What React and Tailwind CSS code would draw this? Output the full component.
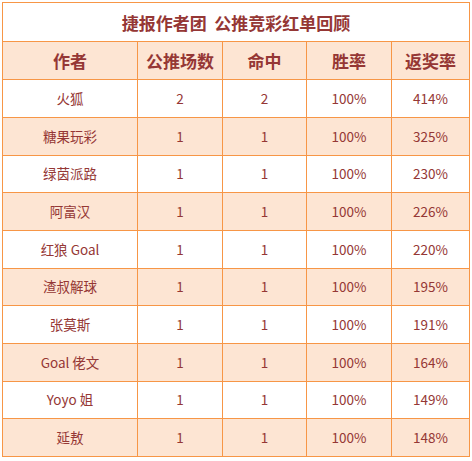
import React from "react";

const rows = [
  ["火狐", "2", "2", "100%", "414%"],
  ["糖果玩彩", "1", "1", "100%", "325%"],
  ["绿茵派路", "1", "1", "100%", "230%"],
  ["阿富汉", "1", "1", "100%", "226%"],
  ["红狼 Goal", "1", "1", "100%", "220%"],
  ["渣叔解球", "1", "1", "100%", "195%"],
  ["张莫斯", "1", "1", "100%", "191%"],
  ["Goal 佬文", "1", "1", "100%", "164%"],
  ["Yoyo 姐", "1", "1", "100%", "149%"],
  ["延敖", "1", "1", "100%", "148%"],
];
const heights = ["h-[38px]", "h-[38px]", "h-[37px]", "h-[38px]", "h-[38px]", "h-[37px]", "h-[38px]", "h-[38px]", "h-[37px]", "h-[38px]"];
const cols = "grid grid-cols-[135px_85px_84px_85px_78px]";
const font = { fontFamily: '"Noto Sans CJK SC", "Noto Sans", sans-serif' };

export default function App() {
  return (
    <div className="w-[472px] h-[461px] bg-white pt-[2px] pl-[2px]" style={font}>
      <div className="w-[468px] border-l border-t border-[#f79646] text-[#953735]">
        <div className="h-[39px] border-r border-b border-[#f79646] bg-white flex items-center justify-center text-[17px] font-bold leading-none">
          捷报作者团&nbsp;&nbsp;公推竞彩红单回顾
        </div>
        <div className={cols + " h-[38px] bg-[#fde5d3] text-[17px] font-bold"}>
          {["作者", "公推场数", "命中", "胜率", "返奖率"].map((h) => (
            <div key={h} className="border-r border-b border-[#f79646] flex items-center justify-center leading-none">
              {h}
            </div>
          ))}
        </div>
        {rows.map((r, i) => (
          <div key={i} className={cols + " " + heights[i] + " text-[13.5px] " + (i % 2 === 0 ? "bg-white" : "bg-[#fde5d3]")}>
            {r.map((c, j) => (
              <div key={j} className="border-r border-b border-[#f79646] flex items-center justify-center leading-none">
                {c}
              </div>
            ))}
          </div>
        ))}
      </div>
    </div>
  );
}
